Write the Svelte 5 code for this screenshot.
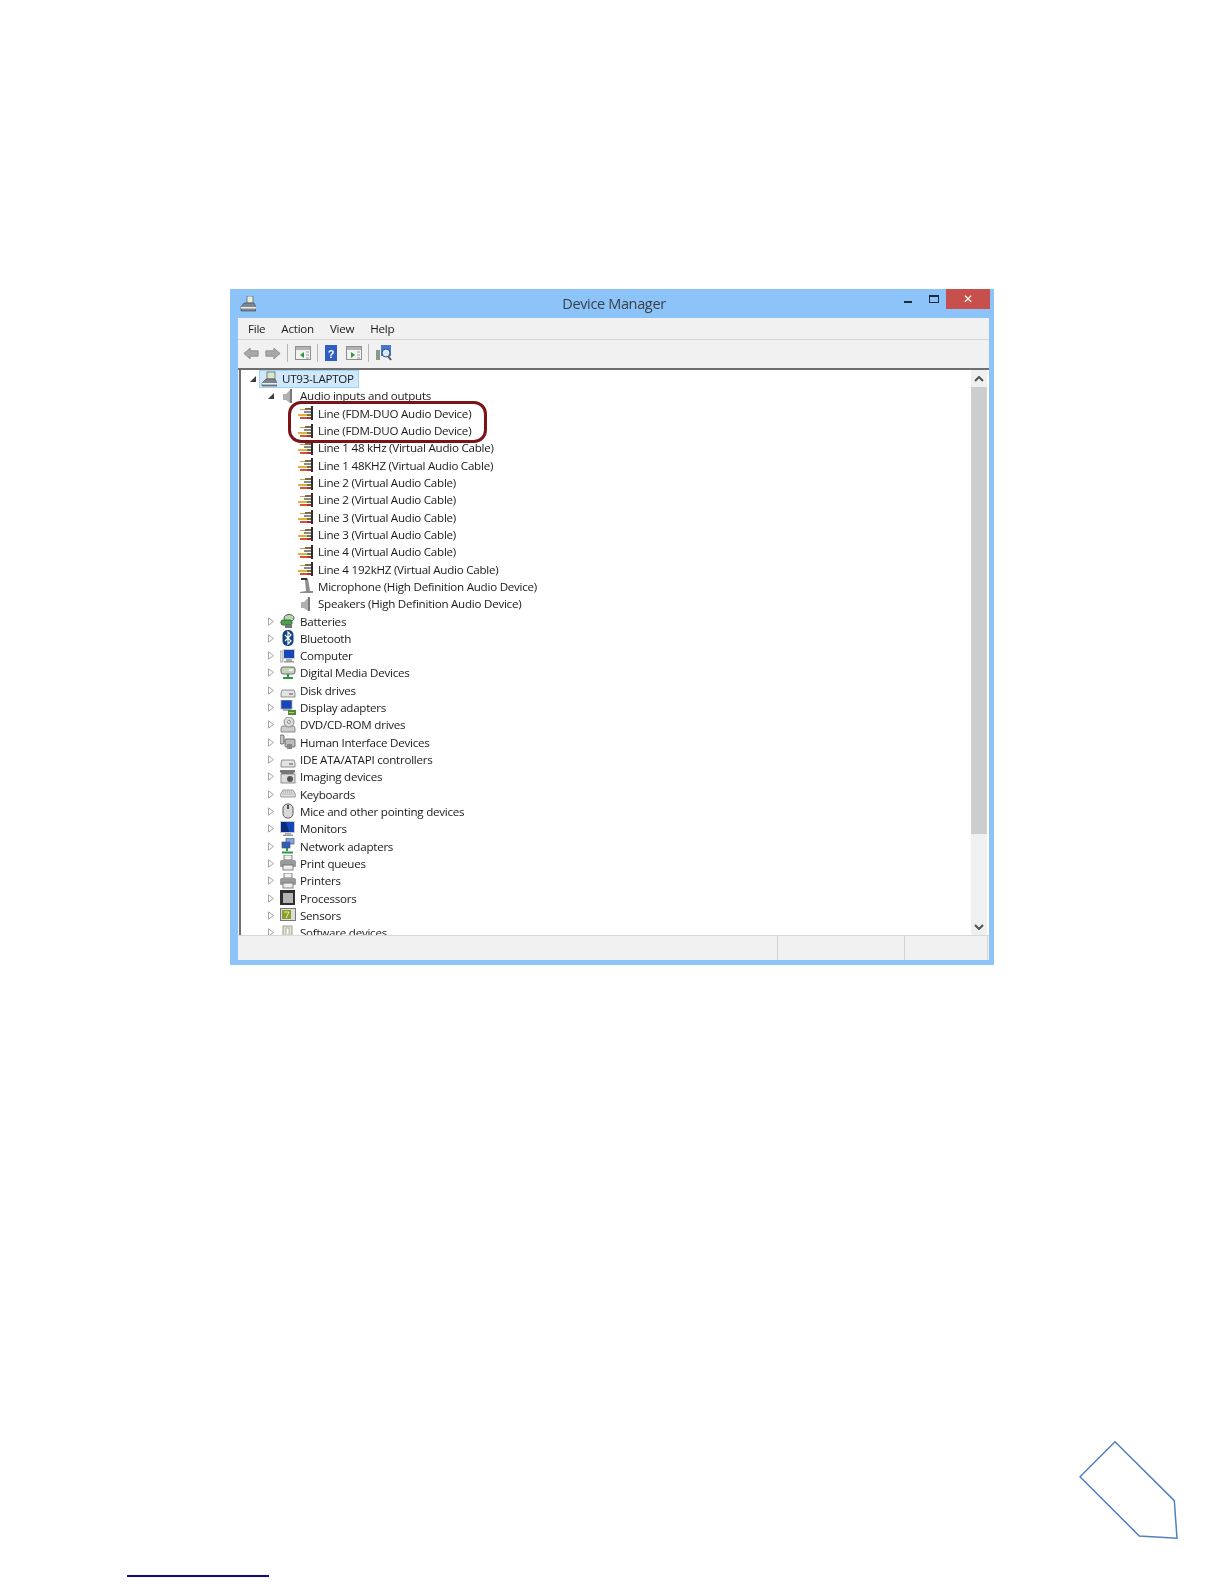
<script>
  const audio = [
    ["Line (FDM-DUO Audio Device)", "line"],
    ["Line (FDM-DUO Audio Device)", "line"],
    ["Line 1 48 kHz (Virtual Audio Cable)", "line"],
    ["Line 1 48KHZ (Virtual Audio Cable)", "line"],
    ["Line 2 (Virtual Audio Cable)", "line"],
    ["Line 2 (Virtual Audio Cable)", "line"],
    ["Line 3 (Virtual Audio Cable)", "line"],
    ["Line 3 (Virtual Audio Cable)", "line"],
    ["Line 4 (Virtual Audio Cable)", "line"],
    ["Line 4 192kHZ (Virtual Audio Cable)", "line"],
    ["Microphone (High Definition Audio Device)", "mic"],
    ["Speakers (High Definition Audio Device)", "speaker"],
  ];
  const groups = [
    ["Batteries", "battery"],
    ["Bluetooth", "bluetooth"],
    ["Computer", "computer"],
    ["Digital Media Devices", "media"],
    ["Disk drives", "disk"],
    ["Display adapters", "display"],
    ["DVD/CD-ROM drives", "dvd"],
    ["Human Interface Devices", "hid"],
    ["IDE ATA/ATAPI controllers", "disk"],
    ["Imaging devices", "imaging"],
    ["Keyboards", "keyboard"],
    ["Mice and other pointing devices", "mouse"],
    ["Monitors", "monitor"],
    ["Network adapters", "network"],
    ["Print queues", "printer"],
    ["Printers", "printer"],
    ["Processors", "cpu"],
    ["Sensors", "sensor"],
    ["Software devices", "software"],
  ];
</script>

{#snippet icon(name)}
  <svg class="icon" viewBox="0 0 16 16" width="16" height="16">
    {#if name === "line"}
      <rect x="13" y="1" width="2" height="14" fill="#2e2e2e" />
      <rect x="7" y="3" width="6" height="2" fill="#7a6a4a" />
      <rect x="2" y="4" width="5" height="1" fill="#c9a04a" />
      <rect x="6" y="6" width="7" height="2" fill="#8a8a8a" />
      <rect x="0" y="9" width="9" height="2" fill="#e0b040" />
      <rect x="9" y="9" width="4" height="2" fill="#6c7a3a" />
      <rect x="2" y="12" width="7" height="2" fill="#d8503a" />
      <rect x="9" y="12" width="4" height="2" fill="#a33" />
    {:else if name === "mic"}
      <path d="M3 0h6l1 1 2 12h3v2H2v-1l6-1-1-11H3z" fill="#8c8c8c" />
      <path d="M3 0h6v2H3z" fill="#333" />
    {:else if name === "speaker"}
      <path d="M3 6h3l4-4v13l-4-3H3z" fill="#b0b0b0" />
      <path d="M10 1h2v14h-2z" fill="#777" />
    {:else if name === "battery"}
      <ellipse cx="9" cy="5" rx="5" ry="3.500" fill="#b7d9b0" stroke="#555" />
      <rect x="1" y="7" width="11" height="5" rx="2" fill="#4aa34a" stroke="#3b6b3b" />
      <rect x="5" y="12" width="7" height="3" fill="#777" />
    {:else if name === "bluetooth"}
      <rect x="2.500" y="0" width="11" height="16" rx="5" fill="#12457f" />
      <path d="M5 5l6 6-3 3V2l3 3-6 6" fill="none" stroke="#fff" stroke-width="1.200" />
    {:else if name === "computer"}
      <rect x="0" y="3" width="3" height="11" fill="#ddd" stroke="#888" stroke-width=".6" />
      <rect x="3" y="1" width="12" height="10" fill="#ccc" />
      <rect x="4" y="2" width="10" height="8" fill="#1646b8" />
      <rect x="6" y="11" width="6" height="2" fill="#aaa" />
      <rect x="4" y="13" width="10" height="1.500" fill="#999" />
    {:else if name === "media"}
      <rect x="1" y="2" width="14" height="7" rx="2" fill="#c5d5b8" stroke="#667" />
      <rect x="9" y="4" width="4" height="2" fill="#eee" />
      <path d="M8 9v3M3 13h10" stroke="#2c9a3c" stroke-width="2" />
    {:else if name === "disk"}
      <path d="M2 8h12l1 3v4H1v-4z" fill="#e3e3e3" stroke="#777" stroke-width=".8" />
      <rect x="9" y="11" width="4" height="2" fill="#9a9a9a" />
    {:else if name === "display"}
      <rect x="1" y="0" width="11" height="9" fill="#1646b8" stroke="#aaa" stroke-width=".8" />
      <rect x="3" y="9" width="8" height="2" fill="#aaa" />
      <rect x="8" y="10" width="8" height="5" fill="#4f8a3c" />
      <rect x="9" y="12" width="5" height="1" fill="#d5c25a" />
    {:else if name === "dvd"}
      <path d="M2 9h12l1 2v4H1v-4z" fill="#ccc" stroke="#777" stroke-width=".8" />
      <circle cx="9" cy="5" r="5" fill="#ddd" stroke="#777" stroke-width=".8" />
      <circle cx="9" cy="5" r="1.500" fill="#fff" stroke="#555" stroke-width=".6" />
    {:else if name === "hid"}
      <rect x="0" y="1" width="4" height="9" rx="1.500" fill="#c8c8c8" stroke="#444" stroke-width=".8" />
      <rect x="5" y="5" width="10" height="8" rx="1" fill="#bbb" stroke="#555" stroke-width=".8" />
      <rect x="7" y="10" width="5" height="5" fill="#888" />
    {:else if name === "imaging"}
      <path d="M0 1h15v2l-2 2H2L0 3z" fill="#777" />
      <rect x="1" y="5" width="14" height="9" fill="#ddd" stroke="#777" stroke-width=".8" />
      <circle cx="10" cy="10" r="3" fill="#555" />
    {:else if name === "keyboard"}
      <path d="M3 4h10l3 5-1 2H1l-1-2z" fill="#ddd" stroke="#888" stroke-width=".8" />
      <path d="M3 6h10M2.500 8h11" stroke="#999" stroke-dasharray="1 1" />
    {:else if name === "mouse"}
      <rect x="3" y="1" width="10" height="14" rx="4.500" fill="#d8d8d8" stroke="#555" />
      <rect x="7" y="2" width="2" height="4" fill="#555" />
    {:else if name === "monitor"}
      <rect x="0" y="0" width="15" height="12" fill="#ccc" />
      <rect x="1" y="1" width="13" height="10" fill="#1646b8" />
      <path d="M1 1h5l3 10H1z" fill="#0a2a80" />
      <rect x="5" y="12" width="6" height="1.500" fill="#aaa" />
      <rect x="3" y="13.500" width="10" height="1.500" fill="#999" />
    {:else if name === "network"}
      <rect x="6" y="0" width="8" height="6" fill="#7fa8de" stroke="#556" stroke-width=".7" />
      <rect x="2" y="4" width="8" height="6" fill="#2a5fc0" stroke="#556" stroke-width=".7" />
      <path d="M7 10v3M2 14.500h11" stroke="#2c9a3c" stroke-width="2" />
    {:else if name === "printer"}
      <rect x="4" y="0" width="8" height="5" fill="#f0f0f0" stroke="#666" stroke-width=".8" />
      <rect x="0" y="5" width="16" height="7" rx="1.500" fill="#9a9a9a" />
      <rect x="3" y="10" width="10" height="5" fill="#eee" stroke="#666" stroke-width=".8" />
    {:else if name === "cpu"}
      <rect x="0" y="0" width="15" height="15" fill="#2f2f2f" />
      <rect x="3" y="3" width="10" height="10" fill="#b5b5b5" />
    {:else if name === "sensor"}
      <rect x="0.500" y="1.500" width="15" height="12" fill="#ddd" stroke="#777" />
      <rect x="2" y="3" width="9" height="9" fill="#8a9c2c" />
      <path d="M4 5h5l-3 6" stroke="#f2ee8a" fill="none" />
    {:else if name === "software"}
      <rect x="3" y="1" width="9" height="13" fill="#e3e6cf" stroke="#888" stroke-width=".8" />
      <rect x="6" y="3" width="3" height="7" fill="#fff" stroke="#888" stroke-width=".6" />
    {:else if name === "root"}
      <rect x="6" y="1" width="8" height="7" fill="#d9e6c9" stroke="#666" stroke-width=".8" />
      <path d="M1 12l4-4h9l2 4v3H1z" fill="#7b8590" stroke="#444" stroke-width=".6" />
      <rect x="1" y="12" width="15" height="1.500" fill="#eee" />
    {/if}
  </svg>
{/snippet}

{#snippet pane(flip)}
  <svg class="tool" viewBox="0 0 16 16" width="16" height="16">
    <rect x="0.500" y="1.500" width="15" height="13" fill="#f2f2f2" stroke="#8f8f8f" />
    <rect x="1" y="2" width="14" height="3" fill="#b3b3b3" />
    <path d={flip ? "M5 7v6l4-3z" : "M9 7v6l-4-3z"} fill="#2c9a3c" />
    <path d="M11 7h3M11 10h3M11 13h3" stroke="#999" />
  </svg>
{/snippet}

<div class="page">
  <div class="window">
    <div class="titlebar">
      <svg class="app-icon" viewBox="0 0 16 16" width="16" height="16">
        <rect x="7" y="0" width="6" height="7" fill="#e6eed8" stroke="#667" stroke-width=".8" />
        <path d="M1 11l3-4h10l2 4v4H1z" fill="#7c8894" stroke="#444" stroke-width=".6" />
        <rect x="1" y="11" width="15" height="1.500" fill="#eee" />
      </svg>
      <span class="title">Device Manager</span>
      <div class="caption">
        <span class="min"></span>
        <span class="max"></span>
        <span class="close">✕</span>
      </div>
    </div>
    <div class="inner">
      <div class="menu">
        <span>File</span><span>Action</span><span>View</span><span>Help</span>
      </div>
      <div class="toolbar">
        <svg class="back" viewBox="0 0 18 16" width="16" height="15"><path d="M1 8l7-6v3h9v6H8v3z" fill="#a9a9a9" stroke="#8a8a8a" /></svg>
        <svg viewBox="0 0 18 16" width="16" height="15"><path d="M17 8l-7-6v3H1v6h9v3z" fill="#a9a9a9" stroke="#8a8a8a" /></svg>
        <i class="sep"></i>
        {@render pane(false)}
        <i class="sep"></i>
        <svg class="help" viewBox="0 0 12 16" width="12" height="16"><rect width="12" height="16" fill="#2f5fc0" /><text x="6" y="12.500" font-size="11" font-family="Liberation Sans" font-weight="700" fill="#fff" text-anchor="middle">?</text></svg>
        {@render pane(true)}
        <i class="sep"></i>
        <svg viewBox="0 0 16 16" width="16" height="16"><rect x="0" y="5" width="4" height="10" fill="#8a9a8a" /><rect x="5" y="0" width="10" height="11" fill="#4a78c8" /><circle cx="10" cy="8" r="4" fill="#dbe7f5" stroke="#2a4f90" /><path d="M12 11l3 4" stroke="#555" stroke-width="2" /></svg>
      </div>
      <div class="content">
        <div class="tree">
          <div class="row root">
            <span class="open"></span>
            <span class="selected">{@render icon("root")}<span>UT93-LAPTOP</span></span>
          </div>
          <div class="row level1">
            <span class="open"></span>
            <span class="cell">{@render icon("speaker")}<span>Audio inputs and outputs</span></span>
          </div>
          {#each audio as [label, kind]}
            <div class="row level2">
              <span class="cell">{@render icon(kind)}<span>{label}</span></span>
            </div>
          {/each}
          {#each groups as [label, kind]}
            <div class="row level1">
              <svg class="closed" viewBox="0 0 6 9" width="6" height="9"><path d="M.5.8l5 3.700-5 3.700z" fill="#fff" stroke="#a6a6a6" /></svg>
              <span class="cell">{@render icon(kind)}<span>{label}</span></span>
            </div>
          {/each}
          <div class="callout"></div>
        </div>
        <div class="scrollbar">
          <svg viewBox="0 0 10 6" width="10" height="6"><path d="M1 5l4-4 4 4" fill="none" stroke="#505050" stroke-width="2" /></svg>
          <div class="track"><div class="thumb"></div></div>
          <svg viewBox="0 0 10 6" width="10" height="6"><path d="M1 1l4 4 4-4" fill="none" stroke="#505050" stroke-width="2" /></svg>
        </div>
      </div>
      <div class="status">
        <div class="pane wide"></div>
        <div class="pane mid"></div>
        <div class="pane end"></div>
      </div>
    </div>
  </div>
  <div class="footer">
    <div class="link-line"></div>
    <svg class="tag" viewBox="0 0 100 100" width="100" height="100">
      <path d="M36 1.700L1 36.700 60.300 96l37.700 2.300-2.700-37.600z" fill="none" stroke="#4f81bd" stroke-width="1.500" />
    </svg>
  </div>
</div>

<style>
  :global(body) {
    margin: 0;
    background: #fff;
  }
  .page {
    width: 1224px;
    height: 1584px;
    padding: 289px 0 0 230px;
    box-sizing: border-box;
    font-family: "Open Sans", "Liberation Sans", sans-serif;
    letter-spacing: -0.25px;
    color: #1a1a1a;
    overflow: hidden;
  }
  .window {
    width: 764px;
    height: 676px;
    background: #8cc3f9;
    padding: 0 5px 5px 8px;
    box-sizing: border-box;
    display: flex;
    flex-direction: column;
    filter: blur(0.3px);
  }
  .titlebar {
    height: 29px;
    flex: none;
    display: flex;
    align-items: center;
    position: relative;
    margin-right: -1px;
  }
  .app-icon {
    margin-left: 2px;
  }
  .title {
    position: absolute;
    left: 0;
    right: 0;
    text-align: center;
    font-size: 14.500px;
    letter-spacing: -0.35px;
    color: #3a3f45;
  }
  .caption {
    margin-left: auto;
    display: flex;
    align-items: flex-start;
    align-self: flex-start;
  }
  .min {
    width: 8px;
    height: 2px;
    background: #1d2b3a;
    margin: 12px 17px 0 0;
  }
  .max {
    width: 8px;
    height: 5px;
    border: 1px solid #1d2b3a;
    border-top-width: 2px;
    margin: 6px 7px 0 0;
  }
  .close {
    width: 44px;
    height: 20px;
    background: #c8504c;
    color: #fff;
    font-size: 12px;
    font-weight: 700;
    line-height: 20px;
    text-align: center;
    font-family: "DejaVu Sans", sans-serif;
  }
  .inner {
    flex: 1;
    min-height: 0;
    background: #f1f1f1;
    display: flex;
    flex-direction: column;
  }
  .menu {
    height: 22px;
    flex: none;
    display: flex;
    align-items: center;
    gap: 16px;
    padding-left: 10px;
    font-size: 11.600px;
    border-bottom: 1px solid #d4d4d4;
    box-sizing: border-box;
  }
  .toolbar {
    height: 30px;
    flex: none;
    display: flex;
    align-items: center;
    padding: 0 0 2px 5px;
    border-bottom: 2px solid #6f6f6f;
    box-sizing: border-box;
  }
  .back {
    margin-right: 6px;
  }
  .help {
    margin-right: 9px;
  }
  .sep {
    width: 1px;
    height: 18px;
    background: #b5b5b5;
    margin: 0 7px 0 6px;
  }
  .content {
    flex: 1;
    min-height: 0;
    display: flex;
    background: #fff;
    border-left: 2px solid #6f6f6f;
    margin-left: 1px;
  }
  .tree {
    flex: 1;
    min-width: 0;
    overflow: hidden;
    position: relative;
    font-size: 11.600px;
  }
  .row {
    height: 17.320px;
    display: flex;
    align-items: center;
    white-space: nowrap;
  }
  .row .icon {
    flex: none;
    margin-right: 4px;
  }
  .cell,
  .selected {
    display: flex;
    align-items: center;
  }
  .root {
    padding-left: 9px;
  }
  .root .selected {
    margin-left: 3px;
    height: 16px;
    padding: 0 4px 0 1px;
    background: #cfe8fc;
    border: 1px solid #9cd3fb;
  }
  .root .icon {
    margin-right: 5px;
  }
  .level1 {
    padding-left: 27px;
  }
  .level1 .cell {
    margin-left: 6px;
  }
  .level2 {
    padding-left: 57px;
  }
  .open {
    width: 0;
    height: 0;
    border-bottom: 6px solid #3c3c3c;
    border-left: 6px solid transparent;
    flex: none;
  }
  .closed {
    flex: none;
  }
  .callout {
    position: absolute;
    left: 47px;
    top: 31px;
    width: 193px;
    height: 36px;
    border: 3px solid #7b1416;
    border-radius: 13px;
  }
  .scrollbar {
    width: 16px;
    margin-right: 2px;
    flex: none;
    background: #f0f0f0;
    display: flex;
    flex-direction: column;
    align-items: center;
    padding: 6px 0 5px;
    box-sizing: border-box;
  }
  .track {
    flex: 1;
    width: 100%;
    margin: 5px 0;
  }
  .thumb {
    height: 447px;
    background: #cdcdcd;
  }
  .status {
    height: 25px;
    flex: none;
    display: flex;
    border-top: 1px solid #d9d9d9;
    box-sizing: border-box;
  }
  .pane {
    border-right: 1px solid #d4d4d4;
    box-sizing: border-box;
  }
  .wide {
    width: 540px;
  }
  .mid {
    width: 127px;
  }
  .end {
    width: 83px;
  }
  .footer {
    margin-left: -230px;
    padding-left: 127px;
    display: flex;
    align-items: flex-start;
  }
  .link-line {
    width: 142px;
    height: 1.500px;
    margin-top: 610px;
    background: #0c0c8a;
  }
  .tag {
    margin: 475px 0 0 810px;
  }
</style>
